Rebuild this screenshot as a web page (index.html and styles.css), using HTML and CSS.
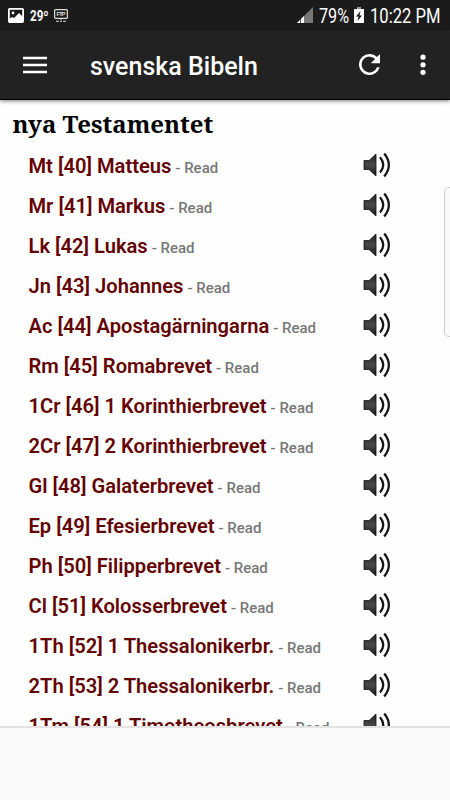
FILE: index.html
```html
<!DOCTYPE html>
<html lang="sv">
<head>
<meta charset="utf-8">
<title>svenska Bibeln</title>
<link rel="stylesheet" href="styles.css">
</head>
<body>
<svg width="0" height="0" class="defs">
  <defs>
    <linearGradient id="cone" x1="0" y1="0" x2="0" y2="1"><stop offset="0" stop-color="#222"/><stop offset=".5" stop-color="#484848"/><stop offset="1" stop-color="#151515"/></linearGradient>
    <symbol id="speaker" viewBox="0 0 28 26">
      <path d="M1 8.500H6L13 2V24L6 17.500H1Z" fill="url(#cone)" stroke="#111" stroke-width=".8"/>
      <path d="M17 5.300Q23.500 13 17 20.500M21.200 1.500Q30.500 13 21.200 24.500" fill="none" stroke="#151515" stroke-width="2.200"/>
    </symbol>
  </defs>
</svg>
<div class="screen">
  <header class="status">
    <svg class="photo" width="16" height="15" viewBox="0 0 16 15"><rect x=".9" y=".9" width="14.200" height="13.200" rx=".8" fill="none" stroke="#fff" stroke-width="1.800"/><circle cx="5" cy="5" r="1.400" fill="#fff"/><path d="M1 11L4 9L6 10L11 5L15 9V14H1Z" fill="#fff"/></svg>
    <span class="temp">29º</span>
    <svg class="ftp" width="14" height="13" viewBox="0 0 14 13"><rect x=".6" y=".6" width="12.800" height="8.800" rx="1" fill="none" stroke="#ddd" stroke-width="1.200"/><path d="M7 9V11M2 12.200H5M6 12.200H8M9 12.200H12" stroke="#ddd" stroke-width="1.100"/><text x="7" y="7.300" text-anchor="middle" textLength="9">FTP</text></svg>
    <svg class="signal" width="16" height="16" viewBox="0 0 16 16"><path d="M0 16L16 0V16Z" fill="#777"/><path d="M0 16L7 9V16Z" fill="#fff"/><path d="M3.500 12V16" stroke="#1b1b1b" stroke-width=".7"/></svg>
    <span class="percent">79%</span>
    <svg class="battery" width="10" height="16" viewBox="0 0 10 16"><path d="M3 0H7V2H3Z" fill="#999"/><path d="M0 2H10V16H0Z" fill="#fff"/><path d="M6.500 4L2 9.500H4.500L3.500 14L8 8.500H5.500Z" fill="#1b1b1b"/></svg>
    <span class="clock">10:22 PM</span>
  </header>
  <nav class="bar">
    <svg class="menu" width="24" height="18" viewBox="0 0 24 18"><path d="M0 2H24M0 9H24M0 16H24" stroke="#fff" stroke-width="2.500"/></svg>
    <h1>svenska Bibeln</h1>
    <svg class="refresh" width="21" height="21" viewBox="4 4 16 16"><path d="M17.650 6.350C16.200 4.900 14.210 4 12 4A8 8 0 1 0 19.730 14H17.650A6 6 0 1 1 12 6C13.660 6 15.140 6.690 16.220 7.780L13 11H20V4Z" fill="#fff"/></svg>
    <svg class="more" width="6" height="22" viewBox="0 0 6 22"><g fill="#fff"><circle cx="3" cy="3.200" r="2.600"/><circle cx="3" cy="10.800" r="2.600"/><circle cx="3" cy="18.300" r="2.600"/></g></svg>
  </nav>
  <main class="content">
    <h2>nya Testamentet</h2>
    <ul>
      <li><p><b>Mt [40] Matteus</b> <small>- Read</small></p><svg><use href="#speaker"/></svg></li>
      <li><p><b>Mr [41] Markus</b> <small>- Read</small></p><svg><use href="#speaker"/></svg></li>
      <li><p><b>Lk [42] Lukas</b> <small>- Read</small></p><svg><use href="#speaker"/></svg></li>
      <li><p><b>Jn [43] Johannes</b> <small>- Read</small></p><svg><use href="#speaker"/></svg></li>
      <li><p><b>Ac [44] Apostagärningarna</b> <small>- Read</small></p><svg><use href="#speaker"/></svg></li>
      <li><p><b>Rm [45] Romabrevet</b> <small>- Read</small></p><svg><use href="#speaker"/></svg></li>
      <li><p><b>1Cr [46] 1 Korinthierbrevet</b> <small>- Read</small></p><svg><use href="#speaker"/></svg></li>
      <li><p><b>2Cr [47] 2 Korinthierbrevet</b> <small>- Read</small></p><svg><use href="#speaker"/></svg></li>
      <li><p><b>Gl [48] Galaterbrevet</b> <small>- Read</small></p><svg><use href="#speaker"/></svg></li>
      <li><p><b>Ep [49] Efesierbrevet</b> <small>- Read</small></p><svg><use href="#speaker"/></svg></li>
      <li><p><b>Ph [50] Filipperbrevet</b> <small>- Read</small></p><svg><use href="#speaker"/></svg></li>
      <li><p><b>Cl [51] Kolosserbrevet</b> <small>- Read</small></p><svg><use href="#speaker"/></svg></li>
      <li><p><b>1Th [52] 1 Thessalonikerbr.</b> <small>- Read</small></p><svg><use href="#speaker"/></svg></li>
      <li><p><b>2Th [53] 2 Thessalonikerbr.</b> <small>- Read</small></p><svg><use href="#speaker"/></svg></li>
      <li><p><b>1Tm [54] 1 Timotheosbrevet</b> <small>- Read</small></p><svg><use href="#speaker"/></svg></li>
    </ul>
  </main>
  <footer class="bottom"></footer>
  <div class="handle"></div>
</div>
</body>
</html>
```
FILE: styles.css
```css
* { box-sizing: border-box; margin: 0; padding: 0; }
body { font-family: Roboto, sans-serif; background: #fefefe; }
.defs { position: absolute; }
.screen { position: relative; width: 450px; height: 800px; overflow: hidden; display: flex; flex-direction: column; }
.status { height: 30px; flex: none; display: flex; align-items: center; background: #1b1b1b; color: #fff; padding: 0 10px 0 8px; }
.temp { font: 700 14px/30px Roboto, sans-serif; margin: 1px 0 0 6px; width: 18px; transform: scaleX(.83); transform-origin: left; white-space: nowrap; }
.ftp { margin-left: 6px; }
.ftp text { font: 700 6px "Liberation Sans", sans-serif; fill: #ddd; }
.signal { margin-left: auto; }
.percent { font-size: 20px; width: 30px; margin: 1px 0 0 6px; transform: scaleX(.81); transform-origin: left; white-space: nowrap; }
.battery { margin-left: 5px; }
.clock { font-size: 20px; width: 70px; margin: 1px 0 0 6px; transform: scaleX(.83); transform-origin: left; white-space: nowrap; }
.bar { height: 70px; flex: none; display: flex; align-items: center; background: #222; color: #fff; border-bottom: 1px solid #000; padding: 0 24px 0 23px; position: relative; box-shadow: 0 1px 4px rgba(0,0,0,.5); z-index: 1; }
.bar h1 { font: 500 25px/30px Roboto, sans-serif; margin: 5px 0 0 43px; flex: 1; }
.bar .more { margin-left: 40px; }
.content { height: 626px; flex: none; overflow: hidden; padding: 7px 0 0 12.5px; }
.content h2 { font: 700 24px/34px "Noto Serif", "DejaVu Serif", serif; color: #000; height: 38px; }
ul { list-style: none; }
li { height: 40px; display: flex; align-items: center; padding: 3px 59px 0 16px; }
li p { flex: 1; line-height: 30px; white-space: nowrap; color: #777; }
li b { font-size: 20.15px; font-weight: 600; color: #640202; }
li small { font-size: 15px; font-weight: 500; }
li svg { width: 28px; height: 26px; margin-top: -4px; }
.bottom { flex: 1; background: #fafafa; border-top: 2px solid #e3e3e3; }
.handle { position: absolute; left: 444px; top: 187px; width: 12px; height: 150px; border: 1px solid #ccc; border-radius: 5px; background: #fafafa; }
```
